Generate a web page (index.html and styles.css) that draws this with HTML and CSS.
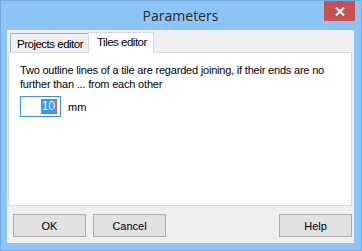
FILE: index.html
```html
<!DOCTYPE html>
<html>
    <head>
        <title>Parameters</title>
        <meta charset="UTF-8">
        <link rel="stylesheet" href="styles.css">
    </head>
    <body>
        <div class="window">
            <div class="titlebar">
                <span class="title">Parameters</span>
                <div class="close">
                    <svg width="10" height="9" viewBox="0 0 10 9">
                        <path d="M1 0.5 L9 8.5 M9 0.5 L1 8.5" stroke="#fff" stroke-width="2"/>
                    </svg>
                </div>
            </div>
            <div class="client">
                <div class="tabs">
                    <div class="tab">Projects editor</div>
                    <div class="tab active">Tiles editor</div>
                </div>
                <div class="pane">
                    <p class="desc">Two outline lines of a tile are regarded joining, if their ends are no further than ... from each other</p>
                    <div class="field">
                        <div class="input"><span class="sel">10</span><span class="caret"></span></div>
                        <span class="unit">mm</span>
                    </div>
                </div>
                <div class="buttons">
                    <button class="btn">OK</button>
                    <button class="btn">Cancel</button>
                    <span class="spacer"></span>
                    <button class="btn">Help</button>
                </div>
            </div>
        </div>
    </body>
</html>
```

FILE: styles.css
```css
* {box-sizing: border-box;}
body {
    margin: 0;
    font-family: "Liberation Sans", Arial, sans-serif;
    font-size: 11px;
    color: #000;
}

/* outer window frame */
.window {
    width: 362px;
    height: 251px;
    background-color: #8cc4f5;
    border: 1px solid #6ea9e0;
    display: flex;
    flex-direction: column;
    padding: 0 7px 7px 6px;
}

.titlebar {
    height: 29px;
    position: relative;
    display: flex;
    justify-content: center;
    align-items: center;
}
.title {
    font-family: "Open Sans", "Noto Sans", sans-serif;
    font-size: 14px;
    color: #2b2b2b;
    margin-top: -1px;
}
.close {
    position: absolute;
    right: -1px;
    top: 0;
    width: 31px;
    height: 20px;
    background-color: #c75050;
    display: flex;
    justify-content: center;
    align-items: center;
}

/* grey dialog area */
.client {
    flex: 1;
    background-color: #f0f0f0;
    display: flex;
    flex-direction: column;
    padding: 1px 2px 6px 1px;
}

.tabs {
    display: flex;
    align-items: flex-end;
    height: 21px;
    padding-left: 2px;
}
.tab {
    height: 19px;
    padding: 3px 0 0 6px;
    border: 1px solid #acacac;
    border-bottom: none;
    background-color: #f0f0f0;
    font-size: 11.5px;
    letter-spacing: -0.5px;
    line-height: 14px;
    width: 79px;
    white-space: nowrap;
}
.tab.active {
    height: 21px;
    width: 66px;
    margin-left: -1px;
    padding-left: 8px;
    background-color: #fff;
    border-color: #d9d9d9;
    margin-bottom: -1px;
    position: relative;
    padding-top: 2px;
}

.pane {
    height: 154px;
    background-color: #fff;
    border: 1px solid #d9d9d9;
    padding: 10px 11px 0 11px;
}
.desc {
    margin: 0;
    line-height: 14px;
    font-size: 11px;
    letter-spacing: -0.2px;
}
.field {
    display: flex;
    align-items: center;
    margin-top: 5px;
}
.input {
    width: 41px;
    height: 21px;
    border: 1px solid #3c8ee0;
    display: flex;
    justify-content: flex-end;
    align-items: center;
    padding-right: 3px;
}
.sel {
    background-color: #3399ff;
    color: #fff;
    font-size: 12px;
    line-height: 15px;
    padding: 0 1px;
}
.caret {
    width: 1px;
    height: 15px;
    background-color: #d86e1f;
}
.unit {
    margin-left: 7px;
    font-size: 11px;
}

.buttons {
    display: flex;
    margin-top: auto;
    padding-left: 5px;
    gap: 7px;
}
.spacer {flex: 1;}
.btn {
    width: 73px;
    height: 23px;
    border: 1px solid #adadad;
    background-color: #e1e1e1;
    font-family: "Liberation Sans", Arial, sans-serif;
    font-size: 11px;
    color: #000;
    padding: 0;
}
```
